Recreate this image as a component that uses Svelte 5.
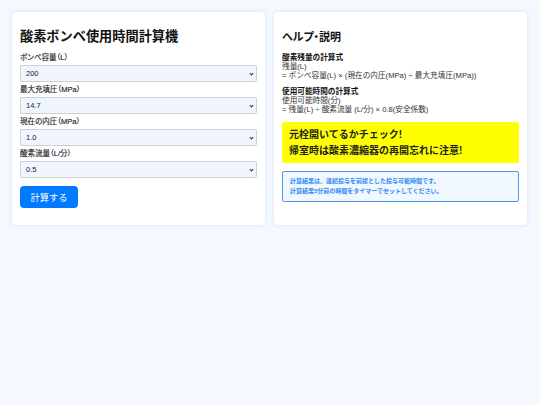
<script>
	const fields = [
		{ label: 'ボンベ容量（L）', options: ['200', '300', '500'] },
		{ label: '最大充填圧（MPa）', options: ['14.7', '19.6'] },
		{ label: '現在の内圧（MPa）', options: ['1.0', '2.0', '3.0'] },
		{ label: '酸素流量（L/分）', options: ['0.5', '1.0', '2.0'] }
	];
</script>

<div class="page">
	<section class="card">
		<h1>酸素ボンベ使用時間計算機</h1>
		{#each fields as field}
			<label class="field">
				<span>{field.label}</span>
				<select>
					{#each field.options as option}
						<option>{option}</option>
					{/each}
				</select>
			</label>
		{/each}
		<button type="button">計算する</button>
	</section>

	<section class="card">
		<h2>ヘルプ・説明</h2>
		<div class="formula">
			<strong>酸素残量の計算式</strong><br />
			残量(L)<br />
			= ボンベ容量(L) × (現在の内圧(MPa) ÷ 最大充填圧(MPa))
		</div>
		<div class="formula">
			<strong>使用可能時間の計算式</strong><br />
			使用可能時間(分)<br />
			= 残量(L) ÷ 酸素流量 (L/分) × 0.8(安全係数)
		</div>
		<div class="warning">
			元栓開いてるかチェック!<br />
			帰室時は酸素濃縮器の再開忘れに注意!
		</div>
		<div class="note">
			計算結果は、連続投与を前提とした投与可能時間です。<br />
			計算結果5分前の時間をタイマーでセットしてください。
		</div>
	</section>
</div>

<style>
	:global(body) {
		margin: 0;
		background: #f4f8ff;
		font-family: 'Liberation Sans', 'Noto Sans CJK JP', sans-serif;
		color: #111;
	}

	.page {
		display: grid;
		grid-template-columns: 253px 253px;
		gap: 9px;
		padding: 12px;
		min-height: 381px;
		align-items: start;
	}

	.card {
		box-sizing: border-box;
		height: 213px;
		background: #fff;
		border-radius: 4px;
		padding: 15px 8px 8px;
		box-shadow: 0 0 4px rgba(40, 70, 120, 0.12);
	}

	h1 {
		margin: 0 0 5px;
		font-size: 13.2px;
		line-height: 20px;
		font-weight: 700;
	}

	h2 {
		margin: 1px 0 7px;
		font-size: 11px;
		line-height: 18px;
		font-weight: 700;
		font-feature-settings: 'palt';
	}

	.field {
		display: block;
	}

	.field span {
		display: block;
		font-size: 7.5px;
		line-height: 11px;
		margin-bottom: 2px;
		color: #222;
		font-feature-settings: 'palt';
		-webkit-text-stroke: 0.15px #222;
	}

	select {
		display: block;
		box-sizing: border-box;
		width: 100%;
		height: 17px;
		margin-bottom: 2px;
		padding: 0 5px;
		border: 1px solid #ccd0d8;
		border-radius: 2px;
		appearance: none;
		background: #f0f6ff url("data:image/svg+xml,%3Csvg xmlns='http://www.w3.org/2000/svg' width='5' height='4' viewBox='0 0 5 4'%3E%3Cpath d='M.7 1 2.5 3 4.3 1' fill='none' stroke='%23333' stroke-width='1.1'/%3E%3C/svg%3E") no-repeat right 2px center;
		font-family: inherit;
		font-size: 7.5px;
		color: #222;
	}

	button {
		display: block;
		margin-top: 8px;
		width: 58px;
		height: 22px;
		padding: 0;
		border: none;
		border-radius: 4px;
		background: #007bff;
		color: #fff;
		font-family: inherit;
		font-size: 9.3px;
	}

	.formula {
		font-size: 7.65px;
		line-height: 9px;
		margin-bottom: 7px;
		color: #333;
	}

	.formula strong {
		color: #111;
	}

	.warning {
		margin-top: 8px;
		padding: 5px 7px 4px;
		background: #ffff00;
		border-radius: 2px;
		font-size: 10px;
		line-height: 16px;
		font-weight: 700;
		color: #222;
	}

	.note {
		margin-top: 8px;
		padding: 4px 7px 5px;
		background: #f0f7ff;
		border: 1px solid #4a98ec;
		border-radius: 2px;
		font-size: 6px;
		line-height: 10px;
		font-weight: 700;
		color: #2f8cf0;
	}
</style>
